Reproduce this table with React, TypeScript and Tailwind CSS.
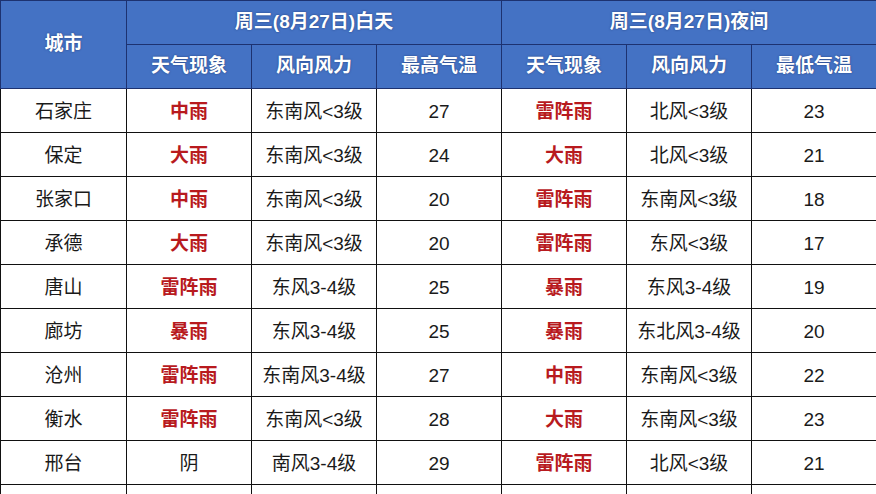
const rows = [
  ["石家庄", "中雨", "东南风<3级", "27", "雷阵雨", "北风<3级", "23"],
  ["保定", "大雨", "东南风<3级", "24", "大雨", "北风<3级", "21"],
  ["张家口", "中雨", "东南风<3级", "20", "雷阵雨", "东南风<3级", "18"],
  ["承德", "大雨", "东南风<3级", "20", "雷阵雨", "东风<3级", "17"],
  ["唐山", "雷阵雨", "东风3-4级", "25", "暴雨", "东风3-4级", "19"],
  ["廊坊", "暴雨", "东风3-4级", "25", "暴雨", "东北风3-4级", "20"],
  ["沧州", "雷阵雨", "东南风3-4级", "27", "中雨", "东南风<3级", "22"],
  ["衡水", "雷阵雨", "东南风<3级", "28", "大雨", "东南风<3级", "23"],
  ["邢台", "阴", "南风3-4级", "29", "雷阵雨", "北风<3级", "21"],
  ["", "", "", "", "", "", ""],
];

// rain words are highlighted red/bold, everything else plain
const isRain = (s: string) => s.includes("雨");

export default function App() {
  const th = "border border-[#1d3270] bg-[#4472c4] text-white font-bold text-[19px] text-center align-middle [text-shadow:0_0_2px_rgba(20,40,90,0.7)]";
  const td = "border border-[#111] h-[44px] text-center align-middle text-[19px] text-[#1a1a1a] p-0 pt-[3px]";

  return (
    <div className="w-[876px] h-[494px] overflow-hidden bg-white font-['Liberation_Sans','Noto_Sans_CJK_SC',sans-serif]">
      <table className="w-[876px] table-fixed border-collapse">
        <colgroup>
          <col className="w-[126px]" />
          <col className="w-[125px]" />
          <col className="w-[125px]" />
          <col className="w-[125px]" />
          <col className="w-[125px]" />
          <col className="w-[125px]" />
          <col className="w-[125px]" />
        </colgroup>
        <thead>
          <tr className="h-[44px]">
            <th rowSpan={2} className={th}>城市</th>
            <th colSpan={3} className={th}>周三(8月27日)白天</th>
            <th colSpan={3} className={th}>周三(8月27日)夜间</th>
          </tr>
          <tr className="h-[44px]">
            <th className={th}>天气现象</th>
            <th className={th}>风向风力</th>
            <th className={th}>最高气温</th>
            <th className={th}>天气现象</th>
            <th className={th}>风向风力</th>
            <th className={th}>最低气温</th>
          </tr>
        </thead>
        <tbody>
          {rows.map((r, i) => (
            <tr key={i} className="h-[44px]">
              {r.map((c, j) => (
                <td
                  key={j}
                  className={
                    (j === 1 || j === 4) && isRain(c)
                      ? td + " !text-[#b81a1e] font-bold"
                      : td
                  }
                >
                  {c}
                </td>
              ))}
            </tr>
          ))}
        </tbody>
      </table>
    </div>
  );
}
